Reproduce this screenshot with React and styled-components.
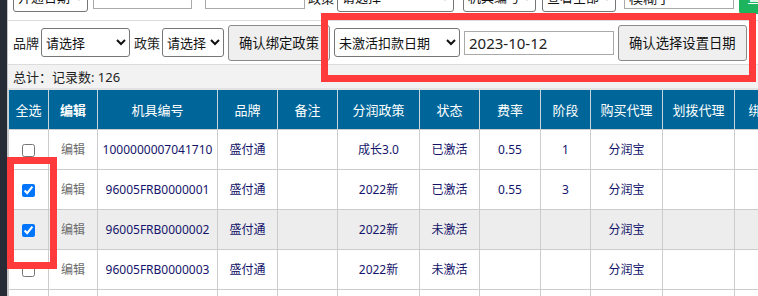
import React from 'react';
import styled, { createGlobalStyle } from 'styled-components';

const GlobalStyle = createGlobalStyle`
  html, body {
    margin: 0;
    padding: 0;
    background: #fff;
    overflow: hidden;
  }
  body {
    font-family: "Noto Sans", "Noto Sans CJK SC", sans-serif;
    color: #333;
  }
`;

const Page = styled.div`
  display: flex;
  height: 296px;
  position: relative;
  overflow: hidden;
`;

const SideStrip = styled.div`
  flex: none;
  width: 7px;
  background: #262b35;
  border-right: 1px solid #c4c4c4;
`;

const Main = styled.div`
  flex: 1;
  min-width: 0;
  overflow: hidden;
`;

const TopRow = styled.div`
  display: flex;
  align-items: center;
  height: 47px;
  margin-top: -26px;
  padding-left: 5px;
  border-bottom: 1px solid #dcdcdc;
  box-sizing: border-box;
`;

const FilterRow = styled.div`
  display: flex;
  align-items: center;
  height: 43px;
  padding-left: 5px;
  border-bottom: 1px solid #dcdcdc;
`;

const Label = styled.span`
  font-size: 13px;
  color: #222;
  margin-right: ${(p) => p.$gap ?? 2}px;
  white-space: nowrap;
`;

const Select = styled.select`
  width: ${(p) => p.$w}px;
  height: 29px;
  margin-right: ${(p) => p.$gap ?? 4}px;
  padding: 0;
  font-family: inherit;
  font-size: 13px;
  color: #111;
  background: #fff;
  border: 1px solid #767676;
  border-radius: 3px;
  flex: none;
`;

const TextInput = styled.input`
  width: ${(p) => p.$w}px;
  height: 24px;
  box-sizing: border-box;
  margin-right: ${(p) => p.$gap ?? 4}px;
  padding: 0 4px;
  font-family: inherit;
  font-size: ${(p) => p.$fs ?? 15}px;
  color: #222;
  border: 1px solid #a9a9a9;
  flex: none;
`;

const Button = styled.button`
  height: 36px;
  margin-right: 4px;
  padding: 0 10px;
  font-family: inherit;
  font-size: 13.333px;
  color: #111;
  background: #efefef;
  border: 1px solid #8a8a8a;
  border-radius: 3px;
  white-space: nowrap;
  flex: none;
`;

const SearchButton = styled.button`
  height: 34px;
  width: 40px;
  padding: 0 8px;
  font-family: inherit;
  font-size: 14px;
  color: #fff;
  background: #1eb35d;
  border: none;
  border-radius: 3px;
  text-align: left;
  flex: none;
`;

const TotalBar = styled.div`
  height: 23px;
  display: flex;
  align-items: center;
  padding-left: 5px;
  font-size: 13px;
  color: #222;
  background: #f2f2f2;
  border-bottom: 2px solid #e2e2e2;
`;

const Table = styled.table`
  border-collapse: collapse;
  table-layout: fixed;
  width: 806px;
  font-size: 12px;
`;

const HeadRow = styled.tr`
  height: 39px;
  background: #006699;
`;

const Th = styled.th`
  color: #fff;
  font-weight: ${(p) => (p.$bold ? 600 : 400)};
  font-size: 13px;
  text-align: center;
  white-space: nowrap;
  overflow: hidden;
  border-left: 1px solid #c9d3dc;
  border-right: 1px solid #c9d3dc;
  padding: 0;
`;

const BodyRow = styled.tr`
  height: 40px;
  background: ${(p) => (p.$shaded ? '#ededed' : '#fff')};
`;

const Td = styled.td`
  border: 1px solid #cccccc;
  text-align: center;
  color: ${(p) => (p.$muted ? '#6b6b6b' : '#14146a')};
  white-space: nowrap;
  overflow: hidden;
  padding: 0;
`;

const CheckBox = styled.input`
  width: 13px;
  height: 13px;
  margin: 0;
  vertical-align: middle;
`;

// red annotation frames drawn over the page
const Marker = styled.div`
  position: absolute;
  left: ${(p) => p.$x}px;
  top: ${(p) => p.$y}px;
  width: ${(p) => p.$w}px;
  height: ${(p) => p.$h}px;
  box-sizing: border-box;
  border: 7px solid #ff3b3b;
  pointer-events: none;
`;

const columns = [
  { title: '全选', w: 40 },
  { title: '编辑', w: 49, bold: true },
  { title: '机具编号', w: 120 },
  { title: '品牌', w: 60 },
  { title: '备注', w: 60 },
  { title: '分润政策', w: 82 },
  { title: '状态', w: 60 },
  { title: '费率', w: 61 },
  { title: '阶段', w: 50 },
  { title: '购买代理', w: 72 },
  { title: '划拨代理', w: 72 },
  { title: '绑定代理', w: 80 },
];

const rows = [
  { checked: false, sn: '1000000007041710', policy: '成长3.0', state: '已激活', rate: '0.55', stage: '1' },
  { checked: true, sn: '96005FRB0000001', policy: '2022新', state: '已激活', rate: '0.55', stage: '3' },
  { checked: true, sn: '96005FRB0000002', policy: '2022新', state: '未激活', rate: '', stage: '', shaded: true },
  { checked: false, sn: '96005FRB0000003', policy: '2022新', state: '未激活', rate: '', stage: '' },
  { checked: false, sn: '96005FRB0000004', policy: '2022新', state: '未激活', rate: '', stage: '' },
];

export default function App() {
  return (
    <>
      <GlobalStyle />
      <Page>
        <SideStrip />
        <Main>
          <TopRow>
            <Select $w={75} $gap={5} defaultValue="a">
              <option value="a">开通日期</option>
            </Select>
            <TextInput $w={99} $gap={13} />
            <TextInput $w={100} $gap={3} />
            <Label $gap={3}>政策</Label>
            <Select $w={117} $gap={9} defaultValue="a">
              <option value="a">请选择</option>
            </Select>
            <Select $w={73} $gap={6} defaultValue="a">
              <option value="a">机具编号</option>
            </Select>
            <Select $w={74} $gap={8} defaultValue="a">
              <option value="a">查看全部</option>
            </Select>
            <TextInput $w={110} $gap={5} $fs={14} defaultValue="模糊字" />
            <SearchButton>查</SearchButton>
          </TopRow>

          <FilterRow>
            <Label>品牌</Label>
            <Select $w={89} defaultValue="a">
              <option value="a">请选择</option>
            </Select>
            <Label>政策</Label>
            <Select $w={62} defaultValue="a">
              <option value="a">请选择</option>
            </Select>
            <Button>确认绑定政策</Button>
            <Select $w={126} defaultValue="a">
              <option value="a">未激活扣款日期</option>
            </Select>
            <TextInput $w={150} defaultValue="2023-10-12" />
            <Button>确认选择设置日期</Button>
          </FilterRow>

          <TotalBar>总计：记录数: 126</TotalBar>

          <Table>
            <colgroup>
              {columns.map((c) => (
                <col key={c.title} style={{ width: c.w }} />
              ))}
            </colgroup>
            <thead>
              <HeadRow>
                {columns.map((c) => (
                  <Th key={c.title} $bold={c.bold}>
                    {c.title}
                  </Th>
                ))}
              </HeadRow>
            </thead>
            <tbody>
              {rows.map((r) => (
                <BodyRow key={r.sn} $shaded={r.shaded}>
                  <Td>
                    <CheckBox type="checkbox" defaultChecked={r.checked} />
                  </Td>
                  <Td $muted>编辑</Td>
                  <Td>{r.sn}</Td>
                  <Td>盛付通</Td>
                  <Td />
                  <Td>{r.policy}</Td>
                  <Td>{r.state}</Td>
                  <Td>{r.rate}</Td>
                  <Td>{r.stage}</Td>
                  <Td>分润宝</Td>
                  <Td />
                  <Td />
                </BodyRow>
              ))}
            </tbody>
          </Table>
        </Main>

        <Marker $x={321} $y={13} $w={435} $h={69} />
        <Marker $x={7} $y={157} $w={50} $h={112} />
      </Page>
    </>
  );
}
